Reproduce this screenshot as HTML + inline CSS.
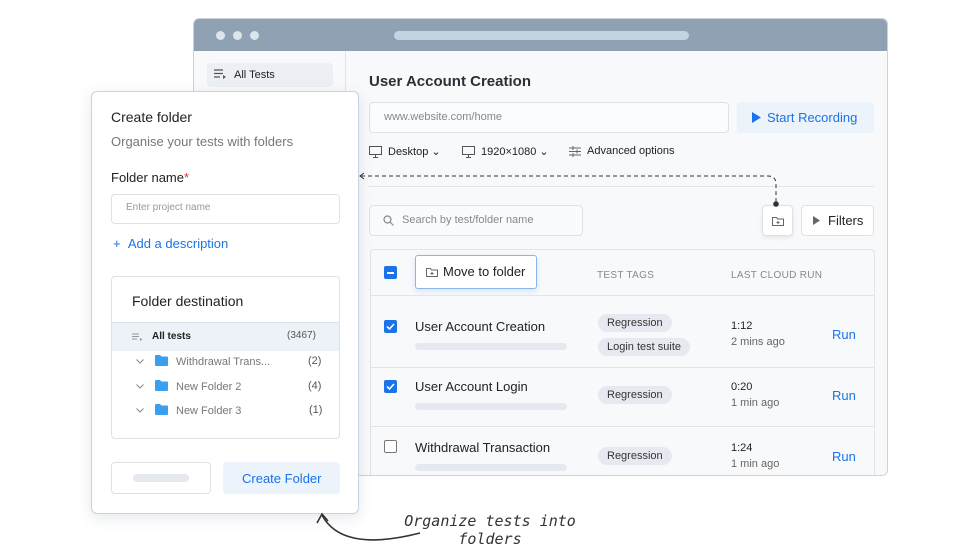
<!DOCTYPE html>
<html><head><style>
*{box-sizing:border-box;margin:0;padding:0}
body{width:980px;height:560px;background:#fff;font-family:"Liberation Sans",sans-serif;position:relative;overflow:hidden;color:#222}
.a{position:absolute}
.win{left:193px;top:18px;width:695px;height:458px;border:1px solid #c9d3dd;border-radius:6px;overflow:hidden;background:#f8f9fb}
.bar{left:0;top:0;width:100%;height:32px;background:#8fa1b3}
.dot{width:9px;height:9px;border-radius:50%;background:#dde5ec;top:12px}
.side{left:0;top:32px;width:152px;height:426px;background:#f8f9fb;border-right:1px solid #dfe4ea}
.t{font-size:13px;color:#222;white-space:nowrap}
.box{border:1px solid #dde2e8;border-radius:4px;background:#fafbfc}
.pill{background:#e6eaf0;border-radius:9px;font-size:11px;color:#333;padding:3px 9px;position:absolute}
.gbar{background:#e5e9ef;height:7px;border-radius:4px;width:152px;position:absolute}
.cb{width:13px;height:13px;border-radius:2px;background:#1a73e8;position:absolute}
.cb svg{position:absolute;left:1px;top:1px}
.run{color:#1a73e8;font-size:13px;position:absolute}
.sub{font-size:11px;color:#666;position:absolute}
.hl{position:absolute;left:0;width:504px;height:1px;background:#e1e5ea}
.dlg{left:91px;top:91px;width:268px;height:423px;background:#fff;border:1px solid #c5d3e2;border-radius:6px;box-shadow:0 4px 14px rgba(80,100,130,.15)}
.row{position:absolute;left:0;width:228px;height:24px;font-size:11px;color:#777}
</style></head><body>
<div class="a win">
 <div class="a bar"></div>
 <div class="a dot" style="left:22px"></div><div class="a dot" style="left:39px"></div><div class="a dot" style="left:56px"></div>
 <div class="a" style="left:200px;top:12px;width:295px;height:9px;border-radius:5px;background:#c3d3e2"></div>
 <div class="a side">
  <div class="a" style="left:13px;top:12px;width:126px;height:24px;background:#eceff3;border-radius:4px"></div>
  <svg class="a" style="left:20px;top:18px" width="13" height="10"><path d="M0 1h9M0 4.5h9M0 8h6" stroke="#555" stroke-width="1.2"/><path d="M9 6l3 2-3 2z" fill="#555"/></svg>
  <div class="a t" style="left:40px;top:18px;font-size:11px">All Tests</div>
 </div>
 <div class="a" style="left:153px;top:32px;width:542px;height:426px">
  <div class="a t" style="left:22px;top:22px;font-size:15px;font-weight:bold;color:#2b2f36">User Account Creation</div>
  <div class="a box" style="left:22px;top:51px;width:360px;height:31px;background:#fbfcfd"></div>
  <div class="a t" style="left:37px;top:60px;font-size:11px;color:#888">www.website.com/home</div>
  <div class="a" style="left:390px;top:51px;width:137px;height:31px;background:#edf3fb;border-radius:3px"></div>
  <svg class="a" style="left:405px;top:61px" width="9" height="11"><path d="M0 0l9 5.5L0 11z" fill="#1a73e8"/></svg>
  <div class="a t" style="left:420px;top:59px;color:#1a73e8">Start Recording</div>
  <svg class="a" style="left:22px;top:95px" width="13" height="12"><rect x=".5" y=".5" width="12" height="8" fill="none" stroke="#555"/><path d="M6.5 9v2M4 11.5h5" stroke="#555"/></svg>
  <div class="a t" style="left:41px;top:94px;font-size:11px">Desktop ⌄</div>
  <svg class="a" style="left:115px;top:95px" width="13" height="12"><rect x=".5" y=".5" width="12" height="8" fill="none" stroke="#555"/><path d="M6.5 9v2M4 11.5h5" stroke="#555"/></svg>
  <div class="a t" style="left:134px;top:94px;font-size:11px">1920×1080 ⌄</div>
  <svg class="a" style="left:222px;top:95px" width="12" height="11"><path d="M0 2h12M0 5.5h12M0 9h12" stroke="#666"/><path d="M4 0v4M8 3.5v4M4 7v4" stroke="#666"/></svg>
  <div class="a t" style="left:240px;top:94px;font-size:11px">Advanced options</div>
  <div class="a" style="left:22px;top:135px;width:505px;height:1px;background:#e1e5ea"></div>
  <div class="a box" style="left:22px;top:154px;width:214px;height:31px"></div>
  <svg class="a" style="left:36px;top:164px" width="11" height="11"><circle cx="4.5" cy="4.5" r="3.5" fill="none" stroke="#888" stroke-width="1.2"/><path d="M7 7l3.5 3.5" stroke="#888" stroke-width="1.2"/></svg>
  <div class="a t" style="left:55px;top:163px;font-size:11px;color:#888">Search by test/folder name</div>
  <div class="a box" style="left:415px;top:154px;width:31px;height:31px;background:#fff;box-shadow:0 2px 4px rgba(0,0,0,.08)"></div>
  <svg class="a" style="left:425px;top:165px" width="12" height="10"><path d="M.5 1.5h4l1 1.5h6v6.5h-11z" fill="none" stroke="#666"/><path d="M6 5v3M4.5 6.5h3" stroke="#666"/></svg>
  <div class="a box" style="left:454px;top:154px;width:73px;height:31px;background:#fff"></div>
  <svg class="a" style="left:466px;top:165px" width="7" height="9"><path d="M0 0l7 4.5L0 9z" fill="#666"/></svg>
  <div class="a t" style="left:481px;top:162px">Filters</div>
  <div class="a" style="left:23px;top:198px;width:505px;height:240px;border:1px solid #e1e5ea;border-radius:4px;background:#f8f9fb">
   <div class="cb" style="left:13px;top:16px"><div style="position:absolute;left:3px;top:5.5px;width:7px;height:2px;background:#fff"></div></div>
   <div class="a" style="left:44px;top:5px;width:122px;height:34px;background:#fff;border:1px solid #8ab7ea;border-radius:3px;box-shadow:0 2px 6px rgba(26,115,232,.15)"></div>
   <svg class="a" style="left:55px;top:17px" width="12" height="10"><path d="M.5 1.5h4l1 1.5h6v6.5h-11z" fill="none" stroke="#666"/><path d="M6 5v3M4.5 6.5h3" stroke="#666"/></svg>
   <div class="a t" style="left:72px;top:14px">Move to folder</div>
   <div class="a t" style="left:226px;top:20px;font-size:10px;color:#888;letter-spacing:.3px">TEST TAGS</div>
   <div class="a t" style="left:360px;top:20px;font-size:10px;color:#888;letter-spacing:.3px">LAST CLOUD RUN</div>
   <div class="hl" style="top:45px"></div>
   <div class="cb" style="left:13px;top:70px"><svg width="11" height="11"><path d="M2 5.5l2.5 2.5 4.5-5" stroke="#fff" stroke-width="1.6" fill="none"/></svg></div>
   <div class="a t" style="left:44px;top:69px">User Account Creation</div>
   <div class="gbar" style="left:44px;top:93px"></div>
   <div class="pill" style="left:227px;top:64px">Regression</div>
   <div class="pill" style="left:227px;top:88px">Login test suite</div>
   <div class="a t" style="left:360px;top:70px;font-size:11px">1:12</div>
   <div class="sub" style="left:360px;top:86px">2 mins ago</div>
   <div class="run" style="left:461px;top:77px">Run</div>
   <div class="hl" style="top:117px"></div>
   <div class="cb" style="left:13px;top:130px"><svg width="11" height="11"><path d="M2 5.5l2.5 2.5 4.5-5" stroke="#fff" stroke-width="1.6" fill="none"/></svg></div>
   <div class="a t" style="left:44px;top:129px">User Account Login</div>
   <div class="gbar" style="left:44px;top:153px"></div>
   <div class="pill" style="left:227px;top:136px">Regression</div>
   <div class="a t" style="left:360px;top:131px;font-size:11px">0:20</div>
   <div class="sub" style="left:360px;top:147px">1 min ago</div>
   <div class="run" style="left:461px;top:138px">Run</div>
   <div class="hl" style="top:176px"></div>
   <div class="a" style="left:13px;top:190px;width:13px;height:13px;border:1.3px solid #777;border-radius:2px;background:#fff"></div>
   <div class="a t" style="left:44px;top:190px">Withdrawal Transaction</div>
   <div class="gbar" style="left:44px;top:214px"></div>
   <div class="pill" style="left:227px;top:197px">Regression</div>
   <div class="a t" style="left:360px;top:192px;font-size:11px">1:24</div>
   <div class="sub" style="left:360px;top:208px">1 min ago</div>
   <div class="run" style="left:461px;top:199px">Run</div>
  </div>
 </div>
</div>
<svg class="a" style="left:355px;top:170px" width="430" height="40"><path d="M6 6H413q8 0 8 8V33" fill="none" stroke="#333" stroke-dasharray="4 3"/><path d="M9 3l-4 3 4 3" fill="none" stroke="#333"/><circle cx="421" cy="34" r="2.8" fill="#333"/></svg>
<div class="a dlg">
 <div class="a t" style="left:19px;top:17px;font-size:14px">Create folder</div>
 <div class="a t" style="left:19px;top:42px;color:#777">Organise your tests with folders</div>
 <div class="a t" style="left:19px;top:78px">Folder name<span style="color:#e03131">*</span></div>
 <div class="a" style="left:19px;top:102px;width:229px;height:30px;border:1px solid #dde2e8;border-radius:4px"></div>
 <div class="a t" style="left:34px;top:110px;font-size:10px;color:#999">Enter project name</div>
 <div class="a t" style="left:21px;top:144px;color:#1a73e8;font-size:13px">+&nbsp;&nbsp;Add a description</div>
 <div class="a" style="left:19px;top:184px;width:229px;height:163px;border:1px solid #dde2e8;border-radius:4px;overflow:hidden">
  <div class="a t" style="left:20px;top:16px;font-size:14px">Folder destination</div>
  <div class="a" style="left:0;top:45px;width:229px;height:1px;background:#dde2e8"></div>
  <div class="a" style="left:0;top:46px;width:229px;height:28px;background:#edf2f9"></div>
  <svg class="a" style="left:20px;top:56px" width="11" height="8"><path d="M0 1h7M0 3.5h7M0 6h5" stroke="#999"/><path d="M8 5l2.5 1.5L8 8z" fill="#999"/></svg>
  <div class="a t" style="left:40px;top:54px;font-size:10px;font-weight:bold">All tests</div>
  <div class="a t" style="left:175px;top:53px;font-size:10px;color:#555">(3467)</div>
  <div class="row" style="top:75px">
   <svg class="a" style="left:24px;top:7px" width="8" height="5"><path d="M.5.5l3.5 3.5L7.5.5" fill="none" stroke="#888"/></svg>
   <svg class="a" style="left:43px;top:3px" width="13" height="11"><path d="M0 1q0-1 1-1h4l1.5 1.5H12q1 0 1 1V10q0 1-1 1H1q-1 0-1-1z" fill="#3b9ff0"/></svg>
   <div class="a" style="left:64px;top:4px">Withdrawal Trans...</div><div class="a" style="left:196px;top:3px;color:#555">(2)</div>
  </div>
  <div class="row" style="top:100px">
   <svg class="a" style="left:24px;top:7px" width="8" height="5"><path d="M.5.5l3.5 3.5L7.5.5" fill="none" stroke="#888"/></svg>
   <svg class="a" style="left:43px;top:3px" width="13" height="11"><path d="M0 1q0-1 1-1h4l1.5 1.5H12q1 0 1 1V10q0 1-1 1H1q-1 0-1-1z" fill="#3b9ff0"/></svg>
   <div class="a" style="left:64px;top:4px">New Folder 2</div><div class="a" style="left:196px;top:3px;color:#555">(4)</div>
  </div>
  <div class="row" style="top:124px">
   <svg class="a" style="left:24px;top:7px" width="8" height="5"><path d="M.5.5l3.5 3.5L7.5.5" fill="none" stroke="#888"/></svg>
   <svg class="a" style="left:43px;top:3px" width="13" height="11"><path d="M0 1q0-1 1-1h4l1.5 1.5H12q1 0 1 1V10q0 1-1 1H1q-1 0-1-1z" fill="#3b9ff0"/></svg>
   <div class="a" style="left:64px;top:4px">New Folder 3</div><div class="a" style="left:197px;top:3px;color:#555">(1)</div>
  </div>
 </div>
 <div class="a" style="left:19px;top:370px;width:100px;height:32px;border:1px solid #dde2e8;border-radius:4px"></div>
 <div class="a" style="left:41px;top:382px;width:56px;height:8px;border-radius:4px;background:#e5e9ef"></div>
 <div class="a" style="left:131px;top:370px;width:117px;height:32px;background:#edf3fb;border-radius:4px"></div>
 <div class="a t" style="left:150px;top:379px;color:#1a73e8">Create Folder</div>
</div>
<svg class="a" style="left:315px;top:510px" width="110" height="40"><path d="M7 5q20 38 98 18" fill="none" stroke="#333" stroke-width="1.6"/><path d="M2 13l5-9 6 7" fill="none" stroke="#333" stroke-width="1.6"/></svg>
<div class="a" style="left:400px;top:512px;width:180px;text-align:center;font-family:'DejaVu Sans Mono',monospace;font-style:italic;font-size:15px;line-height:18px;color:#333">Organize tests into<br>folders</div>
</body></html>
